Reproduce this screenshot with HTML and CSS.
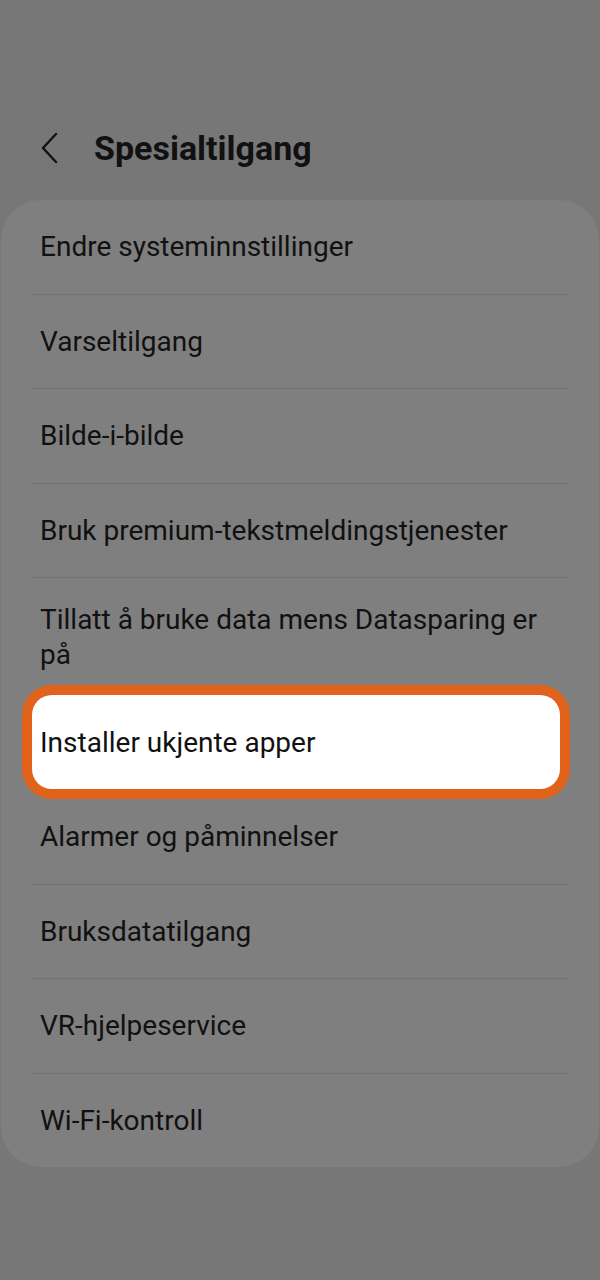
FILE: index.html
```html
<!DOCTYPE html>
<html lang="no">
<head>
    <meta charset="UTF-8">
    <meta name="viewport" content="width=device-width, initial-scale=1.0">
    <title>Spesialtilgang</title>
    <link rel="stylesheet" href="styles.css">
</head>
<body>
    <header class="topbar">
        <svg class="back" width="24" height="34" viewBox="0 0 24 34">
            <path d="M18 3 L5 17 L18 31" fill="none" stroke="#111" stroke-width="2.4" stroke-linecap="round" stroke-linejoin="round"/>
        </svg>
        <h1>Spesialtilgang</h1>
    </header>

    <section class="card">
        <ul class="liste">
            <li class="item">Endre systeminnstillinger</li>
            <li class="item">Varseltilgang</li>
            <li class="item">Bilde-i-bilde</li>
            <li class="item">Bruk premium-tekstmeldingstjenester</li>
            <li class="item to-linjer">Tillatt å bruke data mens Datasparing er på</li>
            <li class="item valgt">Installer ukjente apper</li>
            <li class="item uten-linje">Alarmer og påminnelser</li>
            <li class="item">Bruksdatatilgang</li>
            <li class="item">VR-hjelpeservice</li>
            <li class="item">Wi-Fi-kontroll</li>
        </ul>
    </section>
</body>
</html>
```

FILE: styles.css
```css
body {
    margin: 0;
    padding: 0;
    background-color: #777777;
    font-family: Roboto, "Noto Sans", sans-serif;
    color: #111;
    width: 600px;
    height: 1280px;
    overflow: hidden;
}
.topbar {
    display: flex;
    align-items: center;
    height: 200px;
    padding: 96px 0 0 38px;
    box-sizing: border-box;
}
.topbar .back {
    display: block;
    margin-right: 32px;
}
.topbar h1 {
    margin: 0;
    font-size: 34px;
    font-weight: 700;
}
.card {
    margin: 0 1px;
    background: #7f7f7f;
    border-radius: 40px;
    padding: 0 31px;
}
.liste {
    list-style: none;
    margin: 0;
    padding: 0;
}
.item {
    display: flex;
    align-items: center;
    height: 93.5px;
    padding: 0 8px;
    font-size: 28px;
    line-height: 35px;
    border-top: 1px solid #727272;
}
.item:first-child {
    border-top: none;
}
.to-linjer {
    height: 117px;
    padding-right: 16px;
}
.valgt {
    background: #fff;
    border-top: none;
    border-radius: 20px;
    height: 94px;
    margin-right: 8px;
    box-shadow: 0 0 0 10px #e1631b;
}
.uten-linje {
    border-top: none;
    height: 94.5px;
}
```
